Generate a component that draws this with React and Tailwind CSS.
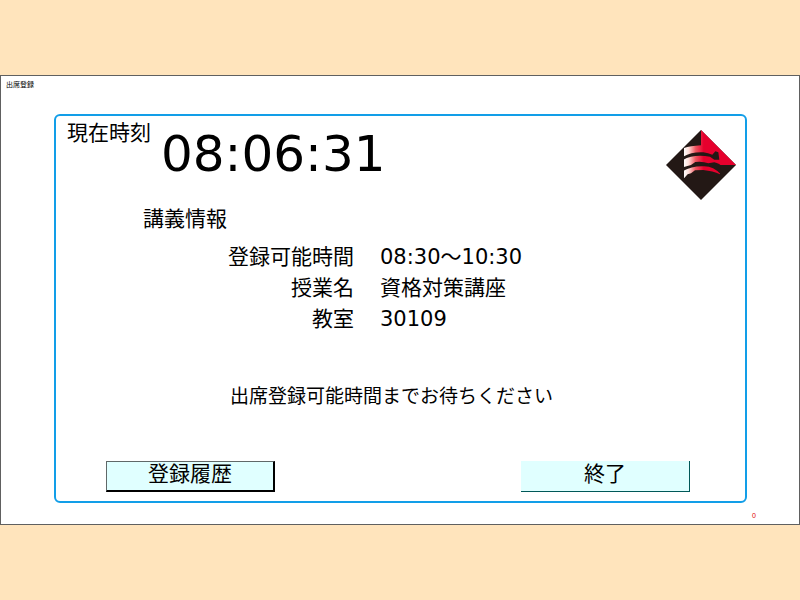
const details = [
  { label: "登録可能時間", value: "08:30～10:30" },
  { label: "授業名", value: "資格対策講座" },
  { label: "教室", value: "30109" },
];

function Logo() {
  return (
    <svg viewBox="33 30 210 210" className="size-[70px] shrink-0" role="img" aria-label="ロゴ">
      <defs>
        <linearGradient id="stripe" gradientUnits="userSpaceOnUse" x1="86" y1="0" x2="146" y2="0">
          <stop offset="0" stopColor="#ffffff" />
          <stop offset="0.25" stopColor="#ffded8" />
          <stop offset="0.6" stopColor="#ee5560" />
          <stop offset="1" stopColor="#e6002d" />
        </linearGradient>
      </defs>
      <path d="M138 30L243 135L138 240L33 135Z" fill="#231815" />
      <path d="M138 30L243 135H194Q196 150 195 163Q174 153 145 150L120 151L108 160L98 163L87 175V84Q105 78 138 76Z" fill="url(#stripe)" />
      <path d="M84 110Q112 95 145 97Q160 99 172 104L181 94L190 97L193 119H178L165 110Q115 102 84 120Z" fill="#231815" />
      <path d="M84 142L108 135L121 126Q142 123 160 130L178 127Q194 132 197 136V163Q176 139 148 139Q112 137 84 153Z" fill="#231815" />
    </svg>
  );
}

export default function App() {
  return (
    <div
      lang="ja"
      className="flex min-h-screen flex-col justify-center bg-[#ffe4bc] font-['DejaVu_Sans','Noto_Sans_CJK_JP',sans-serif] text-black"
    >
      <main className="flex flex-col border border-[#606060] bg-white">
        <h1 className="px-[5px] pt-1 pb-[25px] font-['Noto_Sans_CJK_JP',sans-serif] text-[7px] leading-[9px]">出席登録</h1>
        <section className="mr-[52px] ml-[53px] rounded-md border-2 border-[#129ee8]">
          <div className="flex h-[88px] items-start pr-[9px] pl-[11px]">
            <h2 className="mt-0.5 text-[21px] leading-[31px]">現在時刻</h2>
            <time className="ml-2.5 pt-2 text-[50px] leading-[60px]">08:06:31</time>
            <div className="mt-3.5 ml-auto">
              <Logo />
            </div>
          </div>
          <h2 className="pl-[87px] text-[21px] leading-[31px]">講義情報</h2>
          <dl className="mt-[7px] text-[21px] leading-[31px]">
            {details.map(({ label, value }) => (
              <div key={label} className="grid grid-cols-[298px_1fr] gap-x-[26px]">
                <dt className="text-right">{label}</dt>
                <dd>{value}</dd>
              </div>
            ))}
          </dl>
          <p className="mt-[46px] pl-[174px] text-[19px] leading-[31px]">出席登録可能時間までお待ちください</p>
          <div className="mt-[49px] flex justify-between pr-[55px] pb-[9px] pl-[50px]">
            <button
              type="button"
              className="h-[31px] w-[169px] border border-r-2 border-b-2 border-t-[#606868] border-r-black border-b-black border-l-[#606868] bg-[#e0ffff] pb-1 text-[21px] leading-[24px]"
            >
              登録履歴
            </button>
            <button
              type="button"
              className="h-[31px] w-[169px] border-r border-b border-[#005858] bg-[#e0ffff] pb-1 text-[21px] leading-[24px]"
            >
              終了
            </button>
          </div>
        </section>
        <p className="pt-2 pr-[43px] pb-1 text-right font-['Liberation_Sans',sans-serif] text-[7px] leading-[9px] text-[#e00000]">0</p>
      </main>
    </div>
  );
}
